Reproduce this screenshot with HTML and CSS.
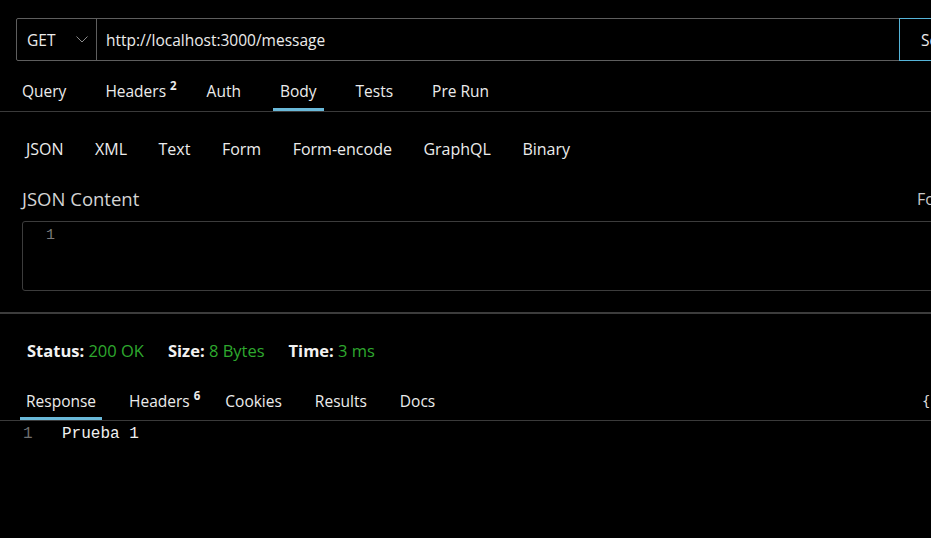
FILE: index.html
```html
<!DOCTYPE html>
<html lang="en">
<head>
<meta charset="utf-8">
<title>Thunder Client</title>
<link rel="stylesheet" href="styles.css">
</head>
<body>
<div class="app">
  <div class="urlbar">
    <div class="method">
      <span>GET</span>
      <svg class="chev" width="12" height="7" viewBox="0 0 12 7"><path d="M0.5 0.5 L6 6 L11.5 0.5" fill="none" stroke="#8a8a8a" stroke-width="1"/></svg>
    </div>
    <div class="url">http://localhost:3000/message</div>
    <div class="send">Send</div>
  </div>

  <nav class="tabs req-tabs">
    <span class="tab">Query</span>
    <span class="tab">Headers<sup class="badge">2</sup></span>
    <span class="tab">Auth</span>
    <span class="tab active">Body</span>
    <span class="tab">Tests</span>
    <span class="tab">Pre Run</span>
  </nav>

  <nav class="body-tabs">
    <span>JSON</span>
    <span>XML</span>
    <span>Text</span>
    <span>Form</span>
    <span>Form-encode</span>
    <span>GraphQL</span>
    <span>Binary</span>
  </nav>

  <div class="content-head">
    <span class="content-title">JSON Content</span>
    <span class="format">Format</span>
  </div>

  <div class="editor">
    <div class="gutter">1</div>
  </div>

  <div class="splitter"></div>

  <div class="status">
    <span><b>Status:</b> <em>200 OK</em></span>
    <span><b>Size:</b> <em>8 Bytes</em></span>
    <span><b>Time:</b> <em>3 ms</em></span>
  </div>

  <nav class="tabs res-tabs">
    <span class="tab active">Response</span>
    <span class="tab">Headers<sup class="badge">6</sup></span>
    <span class="tab">Cookies</span>
    <span class="tab">Results</span>
    <span class="tab">Docs</span>
    <span class="res-actions">{ }</span>
  </nav>

  <div class="output">
    <span class="ln">1</span>
    <span class="code">Prueba 1</span>
  </div>
</div>
</body>
</html>
```

FILE: styles.css
```css
html, body {
  margin: 0;
  padding: 0;
  background: #000;
  overflow: hidden;
}

body {
  font-family: "Open Sans", "Noto Sans", sans-serif;
  font-size: 15.5px;
  color: #ececec;
}

.app {
  width: 967px;
  padding: 18px 0 0 0;
}

/* URL bar */
.urlbar {
  display: flex;
  margin-left: 16px;
  height: 43px;
  box-sizing: border-box;
  border: 1px solid #5e5e5e;
  border-radius: 2px 0 0 2px;
}

.method {
  width: 80px;
  box-sizing: border-box;
  display: flex;
  align-items: center;
  justify-content: space-between;
  padding: 0 8px 0 10px;
  border-right: 1px solid #5e5e5e;
}

.chev {
  display: block;
}

.url {
  flex: 1;
  display: flex;
  align-items: center;
  padding-left: 9px;
}

.send {
  width: 68px;
  box-sizing: border-box;
  margin: -1px -1px -1px 0;
  border: 1px solid #55b4d8;
  display: flex;
  align-items: center;
  padding-left: 21px;
}

/* tabs */
.tabs {
  display: flex;
  align-items: flex-end;
  border-bottom: 1px solid #3a3a3a;
}

.tab {
  line-height: 22px;
  border-bottom: 3px solid transparent;
}

.tab.active {
  border-bottom-color: #6ab9d9;
}

.badge {
  position: relative;
  top: -7px;
  vertical-align: baseline;
  margin-left: 4px;
  font-size: 11.5px;
  font-weight: 700;
  line-height: 0;
}

.req-tabs {
  padding: 19px 0 0 15px;
  gap: 25px;
}

.req-tabs .tab {
  padding: 0 7px 6px;
}

.req-tabs .badge {
  margin-right: -9px;
}

.res-tabs {
  padding: 28px 0 0 20px;
  gap: 21px;
}

.res-tabs .tab {
  padding: 0 6px 5px;
}

.res-tabs .badge {
  margin-right: -8px;
}

.res-actions {
  margin-left: auto;
  width: 45px;
  line-height: 22px;
  padding-bottom: 8px;
  font-family: "DejaVu Sans Mono", monospace;
  font-size: 14px;
  color: #dcdcdc;
}

/* body type tabs */
.body-tabs {
  display: flex;
  gap: 31.5px;
  padding: 26px 0 0 26px;
  line-height: 22px;
  font-size: 16px;
}

.content-head {
  display: flex;
  justify-content: space-between;
  margin: 27px 0 0 22px;
  line-height: 24px;
}

.content-title {
  font-size: 18.5px;
  color: #d4d4d4;
}

.format {
  width: 50px;
  color: #c8c8c8;
  font-size: 16px;
}

.editor {
  margin: 10px 0 0 22px;
  height: 70px;
  box-sizing: border-box;
  border: 1px solid #3c3c3c;
  border-radius: 3px;
}

.gutter {
  width: 32px;
  padding-top: 4px;
  text-align: right;
  line-height: 20px;
  font-family: "Liberation Mono", monospace;
  font-size: 15px;
  color: #7a7a7a;
}

.splitter {
  margin-top: 21px;
  height: 2px;
  background: #3c3c3c;
}

.status {
  display: flex;
  gap: 24px;
  padding: 26px 0 0 27px;
  line-height: 22px;
  font-size: 16.5px;
}

.status b {
  font-weight: 700;
  color: #f2f2f2;
}

.status em {
  font-style: normal;
  color: #2ea82e;
}

.output {
  display: flex;
  padding-top: 2px;
  line-height: 22px;
  font-family: "Liberation Mono", monospace;
  font-size: 16px;
}

.ln {
  width: 39px;
  padding-left: 23px;
  box-sizing: content-box;
  color: #6f6f6f;
}

.code {
  color: #f0f0f0;
}
```
